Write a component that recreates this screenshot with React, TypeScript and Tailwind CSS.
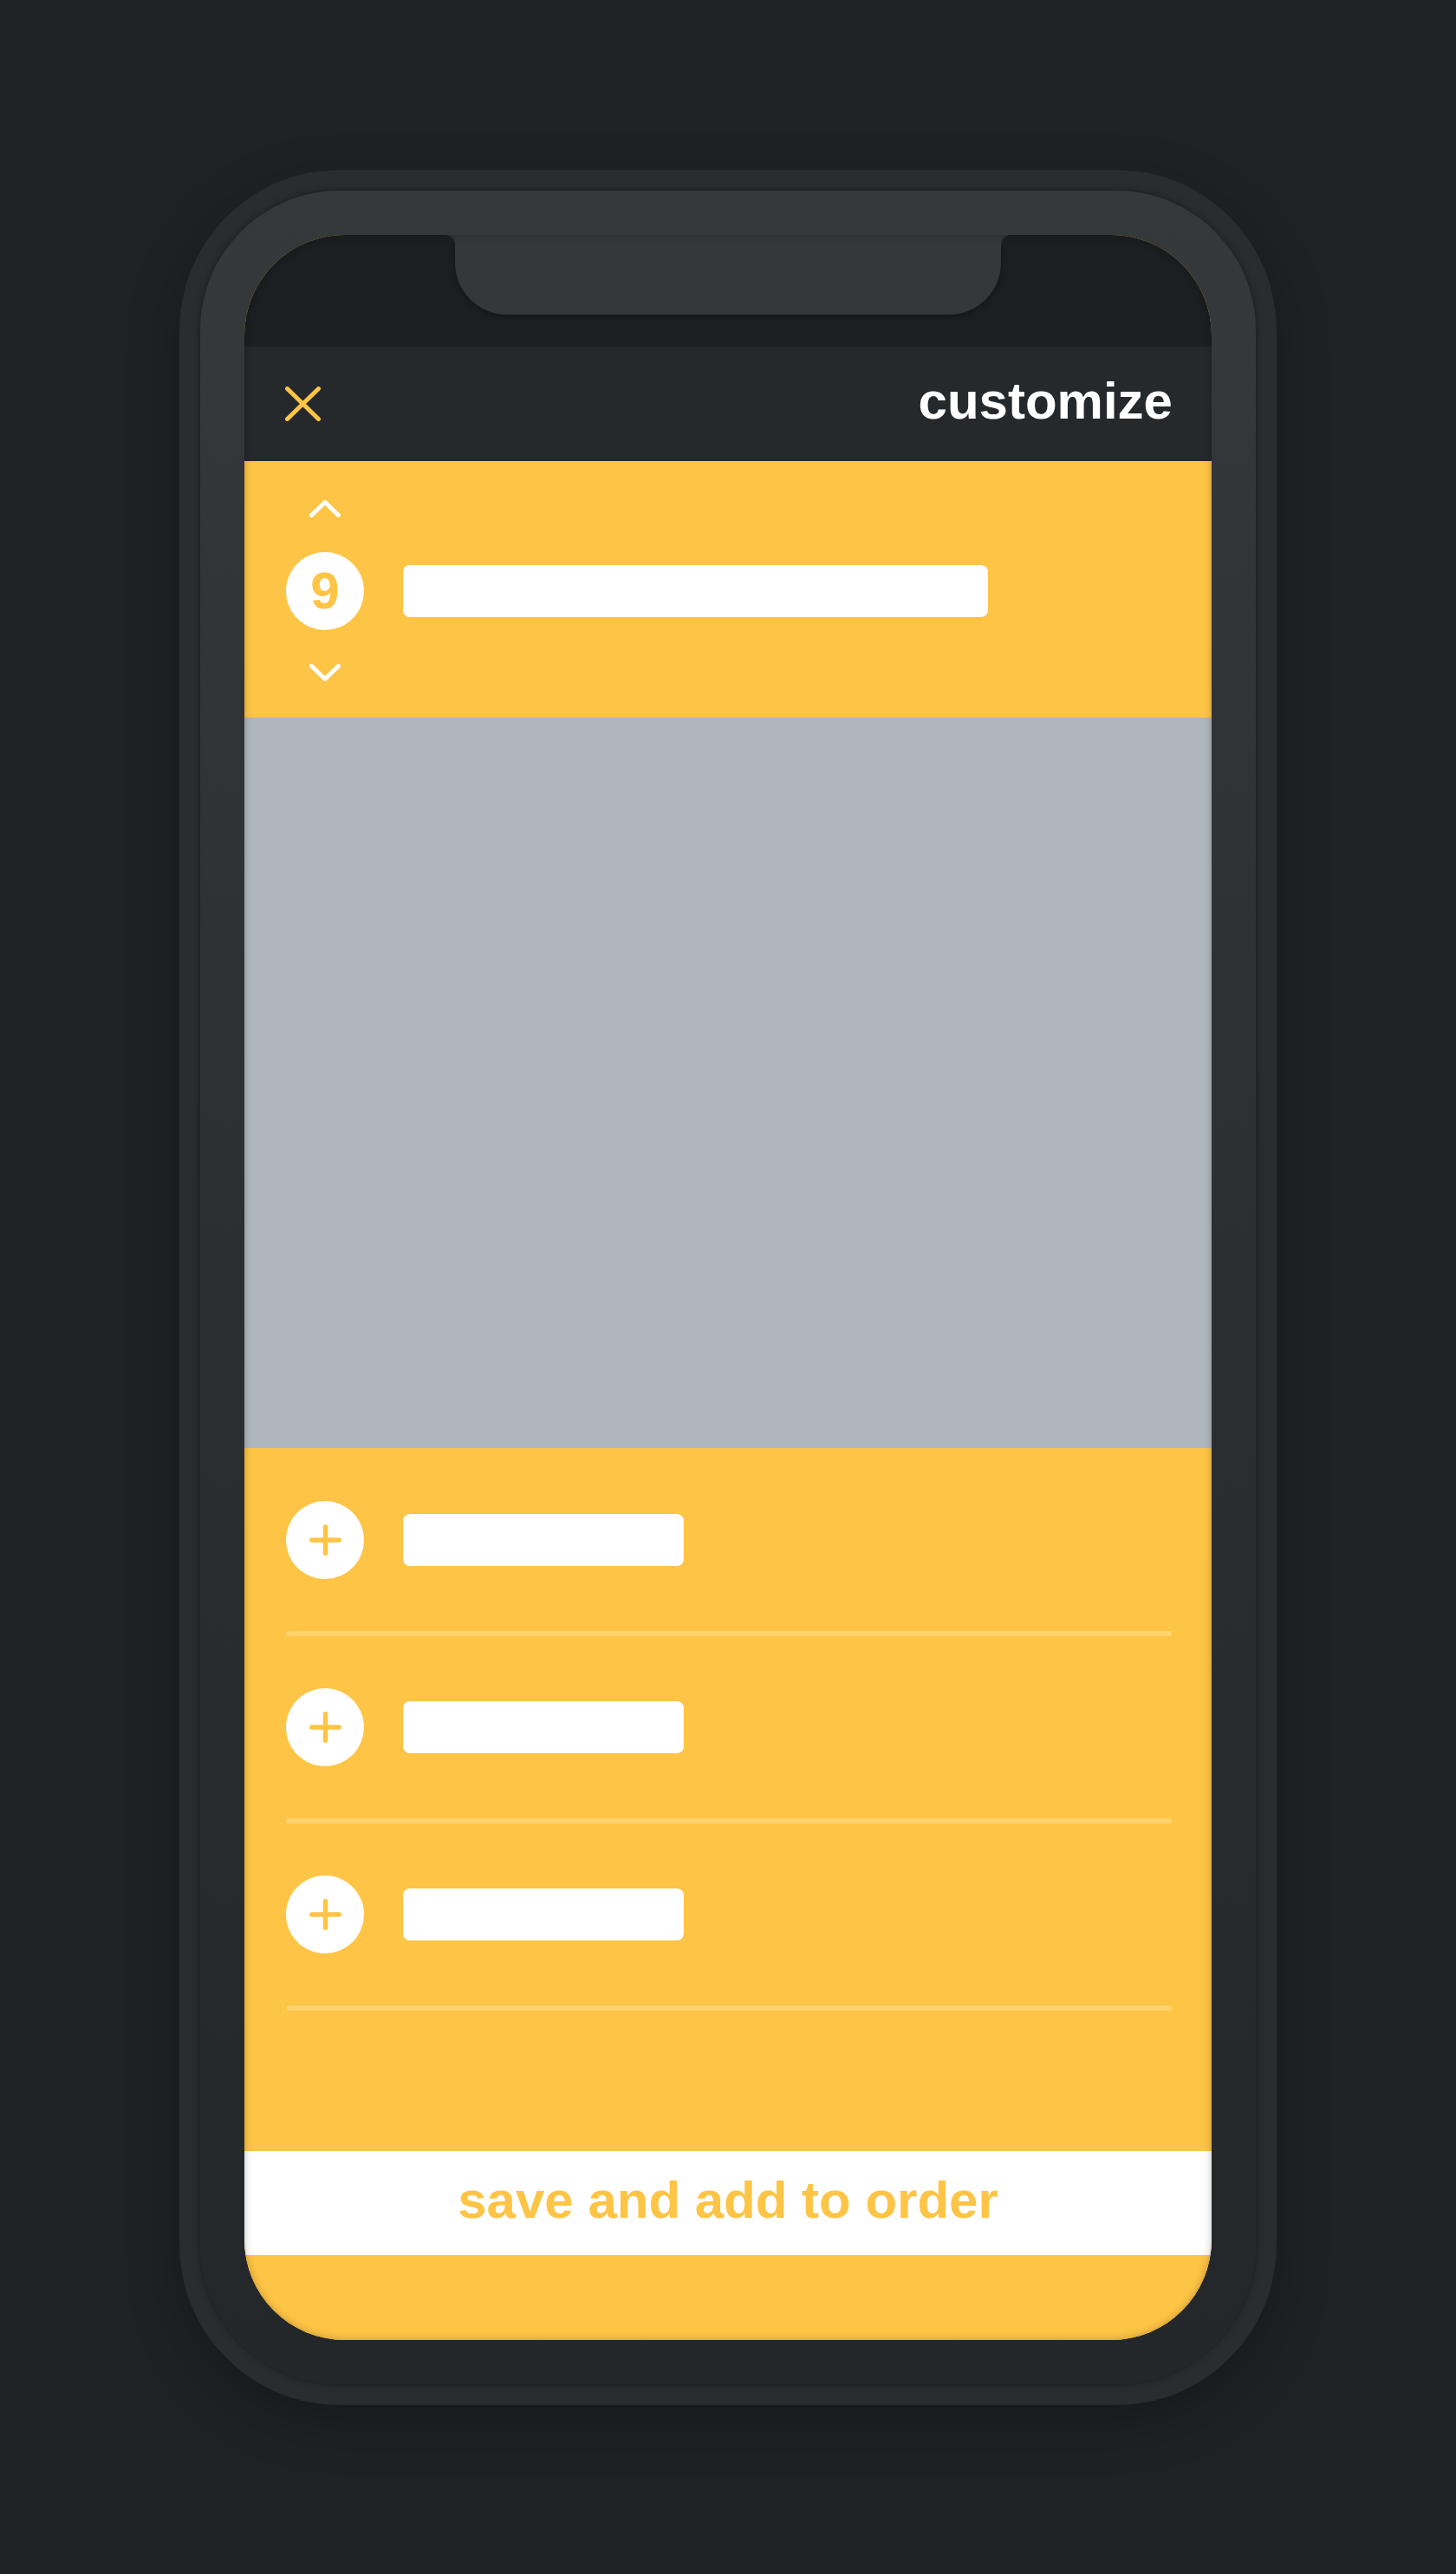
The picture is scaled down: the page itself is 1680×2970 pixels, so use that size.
import React from 'react'

type Addon = { id: number; width: number }

const addons: Addon[] = [
  { id: 1, width: 324 },
  { id: 2, width: 324 },
  { id: 3, width: 324 },
]

function CloseIcon() {
  return (
    <svg width="41" height="40" viewBox="0 0 41 40" fill="none" stroke="#fec445" strokeWidth="5" strokeLinecap="round">
      <path d="M2.5 2.5 L38.5 37.5 M38.5 2.5 L2.5 37.5" />
    </svg>
  )
}

function Chevron({ dir }: { dir: 'up' | 'down' }) {
  return (
    <svg width="36" height="20" viewBox="0 0 36 20" fill="none" stroke="white" strokeWidth="5" strokeLinecap="round" strokeLinejoin="round">
      <path d={dir === 'up' ? 'M2.5 17.5 L18 2.5 L33.5 17.5' : 'M2.5 2.5 L18 17.5 L33.5 2.5'} />
    </svg>
  )
}

function PlusIcon() {
  return (
    <svg width="37" height="36" viewBox="0 0 37 36" fill="none" stroke="#fec445" strokeWidth="5.5" strokeLinecap="round">
      <path d="M18.5 2.75 V33.25 M2.75 18 H34.25" />
    </svg>
  )
}

// little inverse corner where the notch meets the top edge of the screen
function NotchCorner({ side }: { side: 'left' | 'right' }) {
  return (
    <div className="w-[12px] h-[12px] bg-[#35383b]">
      <div className={side === 'left' ? 'w-full h-full bg-[#1c1e21] rounded-tr-[12px]' : 'w-full h-full bg-[#1c1e21] rounded-tl-[12px]'} />
    </div>
  )
}

export default function App() {
  return (
    <div className="min-h-[2970px] w-full bg-[#1f2124] flex items-center justify-center font-['Liberation_Sans',Arial,sans-serif]">
      {/* outer ring */}
      <div className="w-[1266px] h-[2579px] rounded-[185px] bg-[#2a2d30] p-[24px] shadow-[0_20px_60px_rgba(0,0,0,0.25)]">
        {/* frame */}
        <div className="w-full h-full rounded-[161px] bg-gradient-to-b from-[#36393c] via-[#2c2f32] to-[#24272a] p-[51px] shadow-[0_0_8px_rgba(0,0,0,0.45)]">
          {/* screen */}
          <div className="relative w-[1116px] h-[2429px] rounded-[116px] overflow-hidden flex flex-col bg-[#fec445]">
            {/* status area with notch */}
            <div className="h-[129px] shrink-0 bg-[#1c1e21] flex justify-center items-start">
              <NotchCorner side="left" />
              <div className="w-[630px] h-[92px] bg-[#35383b] rounded-b-[60px] shadow-[0_2px_6px_rgba(0,0,0,0.35)]" />
              <NotchCorner side="right" />
            </div>

            {/* header */}
            <header className="h-[132px] shrink-0 bg-[#26292c] flex items-center justify-between pl-[47px] pr-[45px]">
              <button className="flex items-center">
                <CloseIcon />
              </button>
              <h1 className="text-[60px] leading-none font-bold text-white pb-[5px]">customize</h1>
            </header>

            {/* quantity selector */}
            <section className="h-[296px] shrink-0 bg-[#fec445] flex flex-col pt-[45px] px-[48px]">
              <div className="w-[90px] flex justify-center">
                <Chevron dir="up" />
              </div>
              <div className="mt-[40px] flex items-center gap-[45px]">
                <div className="w-[90px] h-[90px] rounded-full bg-white flex items-center justify-center">
                  <span className="text-[60px] leading-none font-bold text-[#fec445]">9</span>
                </div>
                <div className="w-[675px] h-[60px] rounded-[8px] bg-white" />
              </div>
              <div className="mt-[39px] w-[90px] flex justify-center">
                <Chevron dir="down" />
              </div>
            </section>

            {/* product image */}
            <div className="h-[843px] shrink-0 bg-[#b0b6bd]" />

            {/* add-ons */}
            <section className="h-[811px] shrink-0 bg-[#fec445] flex flex-col pt-[1px] pl-[48px] pr-[46px]">
              {addons.map((item) => (
                <div key={item.id}>
                  <div className="h-[210px] flex items-center gap-[45px]">
                    <div className="w-[90px] h-[90px] rounded-full bg-white flex items-center justify-center">
                      <PlusIcon />
                    </div>
                    <div className="h-[60px] rounded-[8px] bg-white" style={{ width: item.width }} />
                  </div>
                  <div className="h-[6px] rounded-full bg-[#ffd36e]" />
                </div>
              ))}
            </section>

            <button className="h-[120px] shrink-0 bg-white flex items-center justify-center">
              <span className="text-[60px] leading-none font-bold text-[#fec445] pb-[6px]">save and add to order</span>
            </button>

            <div className="flex-1 bg-[#fec445]" />

            {/* edge shading over the screen */}
            <div className="pointer-events-none absolute inset-0 rounded-[116px] shadow-[inset_0_0_10px_rgba(0,0,0,0.25)]" />
          </div>
        </div>
      </div>
    </div>
  )
}
